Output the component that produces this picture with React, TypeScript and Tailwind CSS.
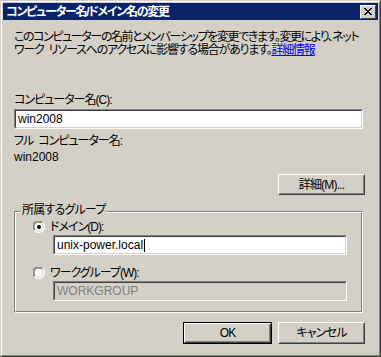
import React from "react";

const font = "font-['Liberation_Sans','Noto_Sans_CJK_JP',sans-serif] [font-feature-settings:'palt']";

function Sunken({ children, disabled, className = "" }: { children?: React.ReactNode; disabled?: boolean; className?: string }) {
  return (
    <div className={`border border-t-[#808080] border-l-[#808080] border-b-white border-r-white ${className}`}>
      <div className={`h-full border border-t-[#404040] border-l-[#404040] border-b-[#d4d0c8] border-r-[#d4d0c8] ${disabled ? "bg-[#d4d0c8] text-[#808080]" : "bg-white text-black"} flex items-center pl-[2px] text-[12px] leading-none`}>
        {children}
      </div>
    </div>
  );
}

function Button({ children, def, className = "" }: { children: React.ReactNode; def?: boolean; className?: string }) {
  const inner = (
    <div className="h-full border border-t-white border-l-white border-b-[#404040] border-r-[#404040]">
      <div className="h-full border border-t-[#d4d0c8] border-l-[#d4d0c8] border-b-[#808080] border-r-[#808080] flex items-center justify-center text-[12px] leading-none tracking-[-0.8px]">
        {children}
      </div>
    </div>
  );
  return def ? (
    <div className={`border border-black ${className}`}>{inner}</div>
  ) : (
    <div className={className}>{inner}</div>
  );
}

function Radio({ checked }: { checked?: boolean }) {
  return (
    <svg width="12" height="12" viewBox="0 0 12 12" className="shrink-0">
      <circle cx="6" cy="6" r="5.5" fill="#ffffff" />
      <path d="M1.2 9.8 A5.5 5.5 0 0 1 9.8 1.2" stroke="#808080" strokeWidth="1" fill="none" />
      <path d="M2.2 8.8 A4.3 4.3 0 0 1 8.8 2.2" stroke="#404040" strokeWidth="1" fill="none" />
      <path d="M1.2 9.8 A5.5 5.5 0 0 0 9.8 1.2" stroke="#ffffff" strokeWidth="1" fill="none" />
      <path d="M2.2 8.8 A4.3 4.3 0 0 0 8.8 2.2" stroke="#d4d0c8" strokeWidth="1" fill="none" />
      {checked && <circle cx="6" cy="6" r="2" fill="#000" />}
    </svg>
  );
}

export default function App() {
  return (
    <div className={`w-[381px] h-[357px] bg-[#d4d0c8] ${font} text-black overflow-hidden`}>
      <div className="h-full border border-t-[#d4d0c8] border-l-[#d4d0c8] border-b-[#404040] border-r-[#404040]">
        <div className="h-full border border-t-white border-l-white border-b-[#808080] border-r-[#808080] p-[1px] flex flex-col">
          {/* title bar */}
          <div className="h-[17px] bg-[#0a246a] flex items-center justify-between pl-[3px] pr-[2px]">
            <span className="text-white font-bold text-[12px] leading-none tracking-[-1.3px]">コンピューター名/ドメイン名の変更</span>
            <div className="w-[16px] h-[14px] bg-[#d4d0c8] border border-t-white border-l-white border-b-[#404040] border-r-[#404040] flex items-center justify-center">
              <svg width="8" height="7" viewBox="0 0 8 7">
                <path d="M0 0L7 7M1 0L8 7M7 0L0 7M8 0L1 7" stroke="#000" strokeWidth="1" />
              </svg>
            </div>
          </div>

          <div className="flex flex-col px-[11px] text-[12px] leading-[13px]">
            <p className="mt-[11px] whitespace-nowrap">
              <span className="tracking-[-1.4px]">このコンピューターの名前とメンバーシップを変更できます。変更により、ネット</span>
              <br />
              <span className="tracking-[-1.2px]">
                ワーク<span className="inline-block w-[5px]" />リソースへのアクセスに影響する場合があります。<span className="text-[#0000ff] underline">詳細情報</span>
              </span>
            </p>

            <div className="mt-[37px] leading-none tracking-[-1px]">コンピューター名(C):</div>
            <Sunken className="mt-[3px] w-[349px] h-[20px]">win2008</Sunken>

            <div className="mt-[6px] leading-none tracking-[-1px]">
              フル<span className="inline-block w-[5px]" />コンピューター名:
            </div>
            <div className="mt-[4px] leading-none">win2008</div>

            <div className="flex justify-end pr-[2px] mt-[11px]">
              <Button className="w-[87px] h-[21px]">詳細(M)...</Button>
            </div>

            {/* group box */}
            <div className="relative mt-[16px] w-[349px] h-[102px] border border-t-[#808080] border-l-[#808080] border-b-white border-r-white">
              <div className="h-full border border-t-white border-l-white border-b-[#808080] border-r-[#808080] flex flex-col pl-[17px]">
                <div className="flex items-center gap-[5px] mt-[8px]">
                  <Radio checked />
                  <span className="leading-none tracking-[-1px]">ドメイン(D):</span>
                </div>
                <Sunken className="ml-[20px] mt-[2px] w-[294px] h-[20px]">
                  unix-power.local<span className="inline-block w-[1px] h-[13px] bg-black ml-[1px]" />
                </Sunken>
                <div className="flex items-center gap-[5px] mt-[12px]">
                  <Radio />
                  <span className="leading-none tracking-[-1px]">ワークグループ(W):</span>
                </div>
                <Sunken disabled className="ml-[20px] mt-[2px] w-[294px] h-[20px]">WORKGROUP</Sunken>
              </div>
              <span className="absolute left-[6px] top-[-8px] px-[1px] bg-[#d4d0c8] leading-none tracking-[-0.8px]">所属するグループ</span>
            </div>

            <div className="flex justify-end gap-[6px] mt-[9px] pr-[2px]">
              <Button def className="w-[89px] h-[22px]">OK</Button>
              <Button className="w-[87px] h-[22px]">キャンセル</Button>
            </div>
          </div>
        </div>
      </div>
    </div>
  );
}
